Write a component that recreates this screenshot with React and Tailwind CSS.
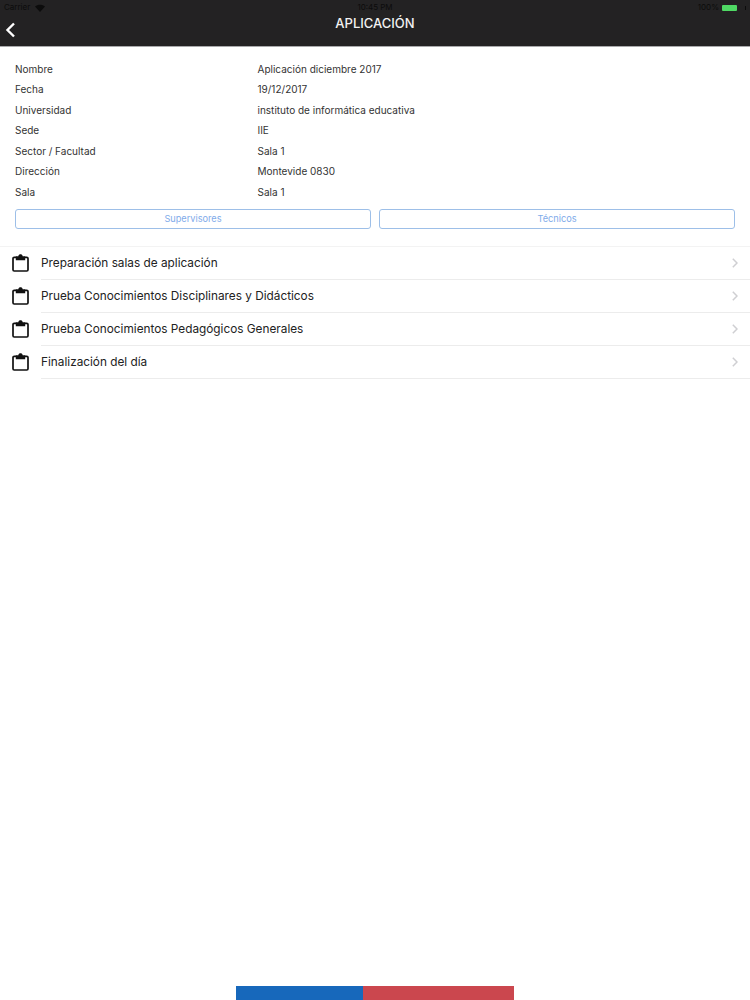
const FONT = "font-['Inter','Liberation_Sans',sans-serif]";

const details = [
  ["Nombre", "Aplicación diciembre 2017"],
  ["Fecha", "19/12/2017"],
  ["Universidad", "instituto de informática educativa"],
  ["Sede", "IIE"],
  ["Sector / Facultad", "Sala 1"],
  ["Dirección", "Montevide 0830"],
  ["Sala", "Sala 1"],
];

const items = [
  "Preparación salas de aplicación",
  "Prueba Conocimientos Disciplinares y Didácticos",
  "Prueba Conocimientos Pedagógicos Generales",
  "Finalización del día",
];

function Clipboard() {
  return (
    <svg width="17" height="18" viewBox="0 0 17 18" fill="none" className="shrink-0">
      <path d="M4.500 3.300H2.200C1.500 3.300 1 3.800 1 4.500V15.800C1 16.500 1.500 17 2.200 17H14.800C15.500 17 16 16.500 16 15.800V4.500C16 3.800 15.500 3.300 14.800 3.300H12.500" stroke="#111" strokeWidth="1.700" />
      <path d="M3.800 2.200H6.300C6.600 .9 7.400 .3 8.500 .3C9.600 .3 10.400 .9 10.700 2.200H13.200V6.200H3.800Z" fill="#111" />
    </svg>
  );
}

function Chevron() {
  return (
    <svg width="6" height="10" viewBox="0 0 6 10" fill="none" className="mr-[12px] shrink-0">
      <path d="M.8 .8L5 5L.8 9.200" stroke="#cfcfd2" strokeWidth="1.500" />
    </svg>
  );
}

export default function App() {
  return (
    <div className={`${FONT} relative flex h-[1000px] w-[750px] flex-col overflow-hidden bg-white`}>
      <header className="relative h-[47px] shrink-0 border-b border-[#a9a9ab] bg-[#232223]">
        <div className="absolute left-[4px] top-[3px] flex items-center gap-[5px] text-[8px] leading-[9px] text-[#0c0c0c]">
          <span>Carrier</span>
          <svg width="10" height="8" viewBox="0 0 10 8"><path d="M0 2.500C2.800 0 7.200 0 10 2.500L5 8Z" fill="#0c0c0c" /></svg>
        </div>
        <div className="absolute inset-x-0 top-[3px] text-center text-[8px] leading-[9px] text-[#0c0c0c]">10:45 PM</div>
        <div className="absolute right-[4px] top-[3px] flex items-center gap-[3px] text-[8px] leading-[9px] text-[#0c0c0c]">
          <span>100%</span>
          <span className="h-[6px] w-[15px] rounded-[1px] bg-[#4fd964]" />
          <span className="ml-[5px] h-[4px] w-[1px] bg-[#0c0c0c]" />
        </div>
        <div className="absolute inset-x-0 top-[14px] text-center text-[13px] font-medium leading-[18px] text-[#f2f2f2]">APLICACIÓN</div>
        <svg width="11" height="16" viewBox="0 0 11 16" fill="none" className="absolute left-[5px] top-[22px]">
          <path d="M9 1.500L2.500 8L9 14.500" stroke="#fff" strokeWidth="2.400" />
        </svg>
      </header>

      <section className="shrink-0 px-[15px] pt-[12px]">
        <dl className="flex flex-col">
          {details.map(([label, value]) => (
            <div key={label} className="flex h-[20.500px] items-center text-[10px] text-[#333]">
              <dt className="w-[242.500px]">{label}</dt>
              <dd>{value}</dd>
            </div>
          ))}
        </dl>
        <div className="mt-[6px] flex gap-[8px]">
          <button className="h-[20px] flex-1 rounded-[3px] border border-[#9dbfe8] text-[9.200px] text-[#7fabea]">Supervisores</button>
          <button className="h-[20px] flex-1 rounded-[3px] border border-[#9dbfe8] text-[9.200px] text-[#7fabea]">Técnicos</button>
        </div>
      </section>

      <ul className="mt-[17px] shrink-0 border-t border-[#f3f3f3]">
        {items.map((item) => (
          <li key={item} className="flex h-[33px] items-center pl-[12px]">
            <Clipboard />
            <div className="ml-[12px] flex h-full flex-1 items-center justify-between border-b border-[#ececec] pt-[1px]">
              <span className="pt-[2px] text-[11.800px] text-[#222]">{item}</span>
              <Chevron />
            </div>
          </li>
        ))}
      </ul>

      <div className="mt-auto flex h-[14px] shrink-0 justify-center">
        <div className="w-[127px] bg-[#1768bb]" />
        <div className="w-[151px] bg-[#cb474e]" />
      </div>
    </div>
  );
}
